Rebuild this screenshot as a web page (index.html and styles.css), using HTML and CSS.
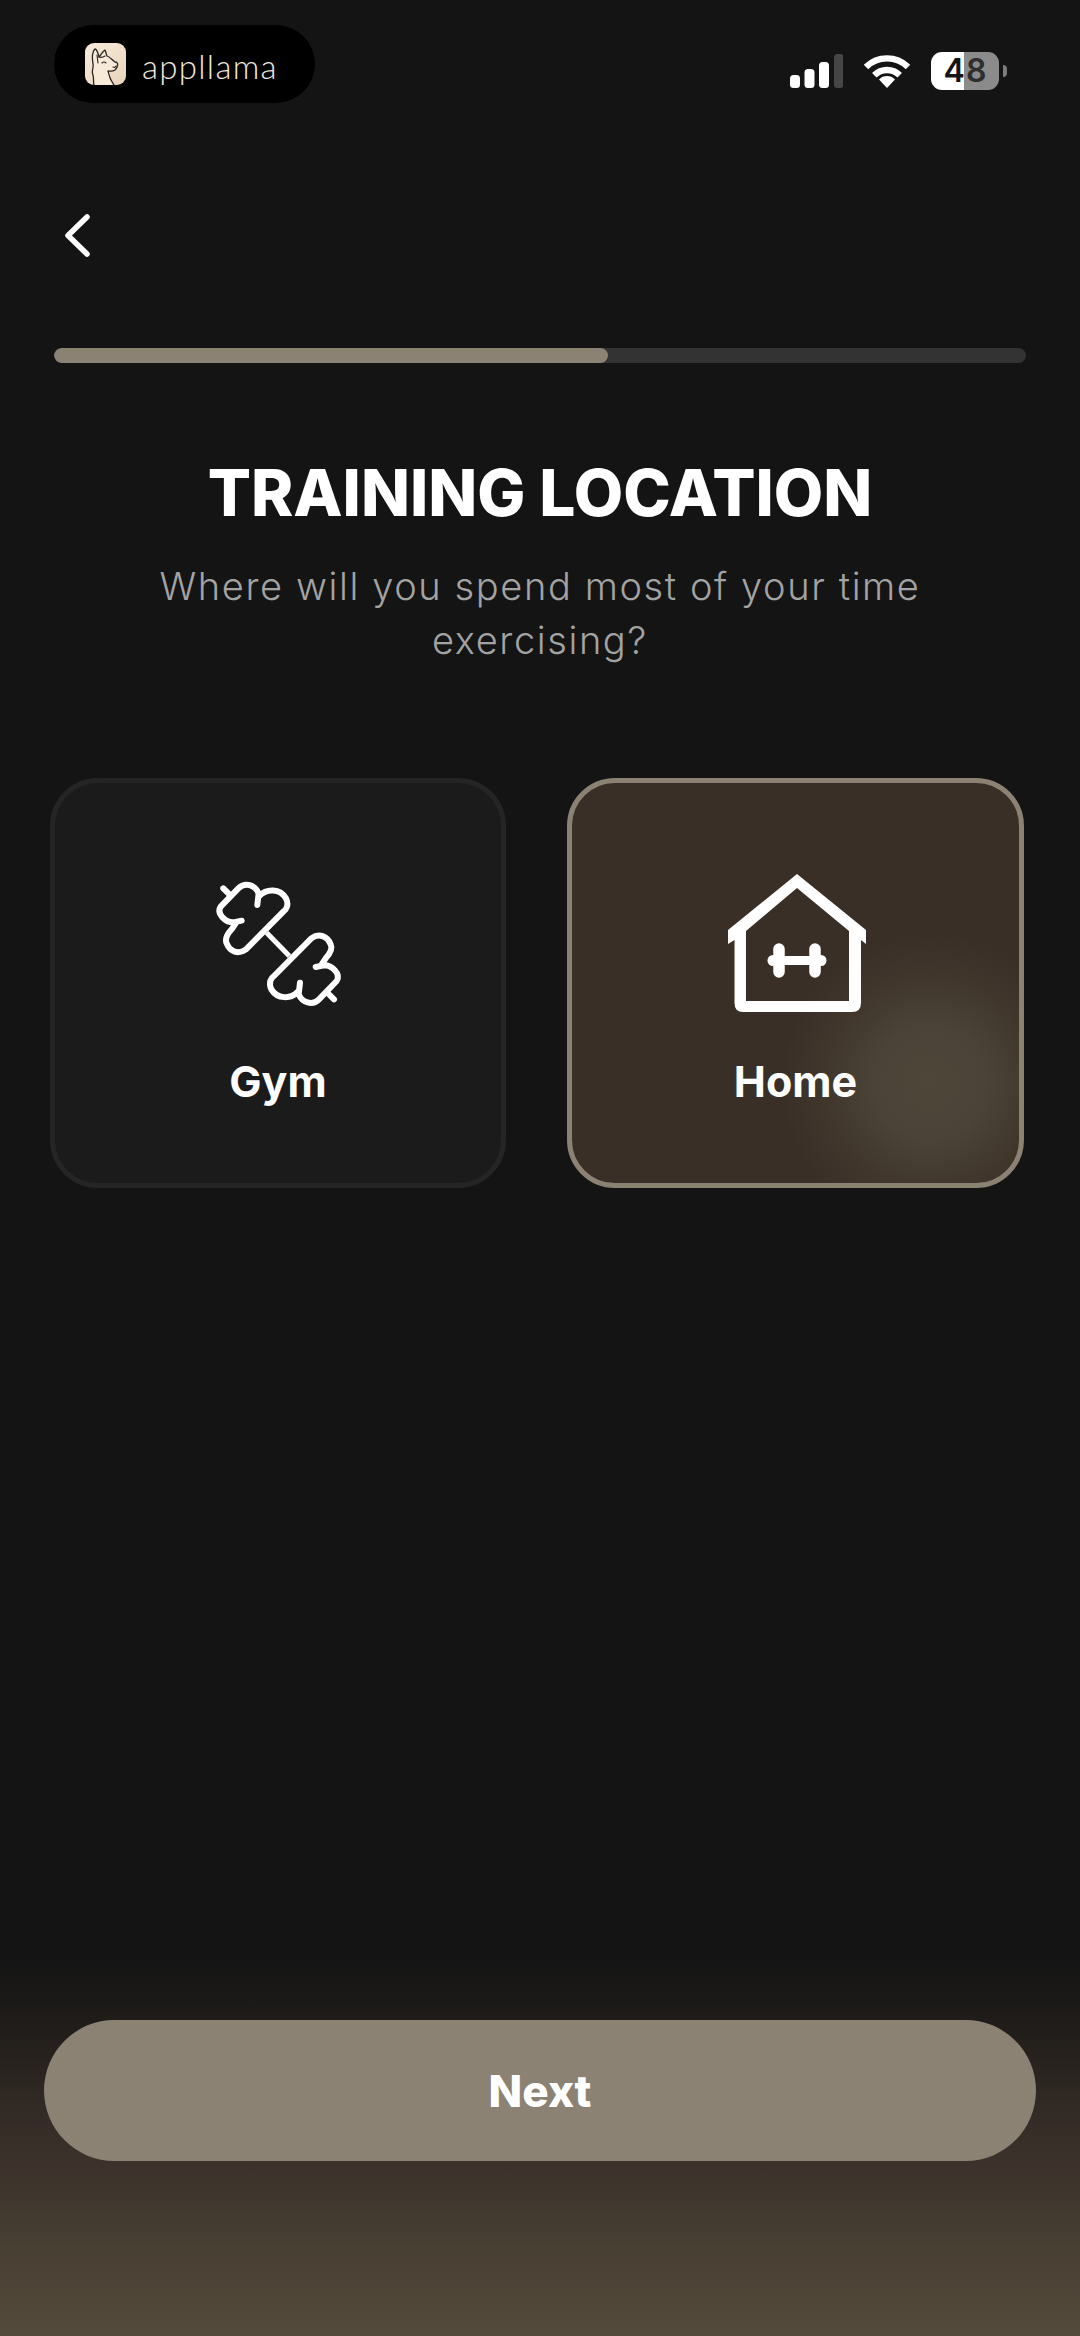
FILE: index.html
```html
<!DOCTYPE html>
<html lang="en">
<head>
<meta charset="utf-8">
<title>Training location</title>
<link rel="stylesheet" href="styles.css">
</head>
<body>
<main class="screen">
  <header class="status">
    <div class="brand">
      <svg class="brand-icon" viewBox="0 0 41 42" width="41" height="42">
        <defs><linearGradient id="lg" x1="0" y1="0" x2="1" y2="1"><stop offset="0" stop-color="#f8ecdc"/><stop offset="1" stop-color="#e9d3ba"/></linearGradient></defs>
        <rect width="41" height="42" rx="9" fill="url(#lg)"/>
        <path d="M9 42C8 38 9 35 8 32C6 28 9 25 8 21C7 15 7 9 10 6C12 6 13 10 14 14C16 12 17 9 20 7C21 9 21 11 22 13C25 14 27 17 30 19C34 19 33 24 30 27C27 29 25 28 23 28C24 33 26 38 29 42" fill="#f7ead9" stroke="#2a2622" stroke-width="1.3" stroke-linejoin="round" stroke-linecap="round"/>
        <path d="M17 20q2-2 4 0M28 24q2 1 3-1M12 12l1 8M14 14q3 1 6-1" fill="none" stroke="#2a2622" stroke-width="1.1" stroke-linecap="round"/>
      </svg>
      <span class="brand-name">appllama</span>
    </div>
    <div class="indicators">
      <svg class="signal" viewBox="0 0 53 34" width="53" height="34">
        <rect x="0" y="21" width="10" height="13" rx="3.5" fill="#fff"/>
        <rect x="14.500" y="15" width="10" height="19" rx="3.500" fill="#fff"/>
        <rect x="29" y="8" width="10" height="26" rx="3.500" fill="#fff"/>
        <rect x="44" y="0" width="9.500" height="34" rx="3.500" fill="#464646"/>
      </svg>
      <svg class="wifi" viewBox="864 55 46 33" width="46" height="33">
        <path d="M866 67A30 30 0 0 1 908 67M874.300 75.300A18 18 0 0 1 899.700 75.300" fill="none" stroke="#fff" stroke-width="6.400"/>
        <path d="M887 88L879 79.500A11 11 0 0 1 895 79.500Z" fill="#fff"/>
      </svg>
      <div class="battery-wrap">
        <div class="battery"><span>4</span><span class="dim">8</span></div>
        <span class="nub"></span>
      </div>
    </div>
  </header>

  <button class="back" aria-label="Back">
    <svg viewBox="0 0 30 46" width="30" height="46"><path d="M24 4L5 22.500L24 41" fill="none" stroke="#fff" stroke-width="5.500" stroke-linecap="round" stroke-linejoin="round"/></svg>
  </button>

  <div class="progress"><div class="progress-fill" style="width:57%"></div></div>

  <section class="intro">
    <h1>TRAINING LOCATION</h1>
    <p>Where will you spend most of your time exercising?</p>
  </section>

  <section class="options">
    <article class="card">
      <svg class="card-icon gym" viewBox="0 0 480 480" width="160" height="160">
        <defs>
          <g id="plate" fill="none" stroke="#fff" stroke-width="18" stroke-linecap="round" stroke-linejoin="round">
            <path d="M70 85L92 107"/>
            <path d="M125 182L100 187C78 188 48 162 62 140L115 85C135 65 165 75 176 100L172 135"/>
            <path d="M178 108C200 85 240 85 258 115C268 135 258 150 250 155L138 268C115 285 90 275 80 250C73 235 82 222 95 208L107 190"/>
          </g>
        </defs>
        <use href="#plate"/>
        <use href="#plate" transform="rotate(180 236 251.500)"/>
        <path d="M200 218L268 288" stroke="#fff" stroke-width="15" fill="none"/>
      </svg>
      <h2>Gym</h2>
    </article>
    <article class="card selected">
      <svg class="card-icon" viewBox="0 0 170 160" width="170" height="160">
        <path fill-rule="evenodd" fill="#fff" d="M86 14L155 70V84L150 80V143Q150 152 141 152H32Q23.500 152 23.500 143V80L17 84V70ZM86 28L35 71V141H138V71Z"/>
        <path d="M68 89V112M104 89V112" stroke="#fff" stroke-width="11.500" stroke-linecap="round"/>
        <path d="M62 100.500H110" stroke="#fff" stroke-width="9" stroke-linecap="round"/>
        <circle cx="62" cy="100.500" r="5.500" fill="#fff"/><circle cx="110" cy="100.500" r="5.500" fill="#fff"/>
      </svg>
      <h2>Home</h2>
    </article>
  </section>

  <footer class="footer">
    <button class="next">Next</button>
  </footer>
</main>
</body>
</html>
```

FILE: styles.css
```css
* { box-sizing: border-box; }
html, body { margin: 0; padding: 0; background: #141414; }
body { font-family: Inter, "Liberation Sans", sans-serif; color: #fff; }

.screen {
  width: 1080px;
  height: 2336px;
  display: flex;
  flex-direction: column;
  overflow: hidden;
}

.status {
  display: flex;
  justify-content: space-between;
  align-items: flex-start;
  padding: 25px 73px 0 54px;
  height: 103px;
}
.brand {
  width: 261px;
  height: 78px;
  border-radius: 39px;
  background: #000;
  display: flex;
  align-items: center;
  gap: 16px;
  padding-left: 31px;
}
.brand-icon { flex: none; }
.brand-name {
  font-family: Lato, sans-serif;
  font-weight: 300;
  font-size: 33px;
  letter-spacing: 1.300px;
  color: #f3e9dc;
  padding-top: 3px;
}
.indicators {
  display: flex;
  align-items: flex-start;
  padding-top: 27px;
}
.signal { margin-top: 2px; }
.wifi { margin: 3px 0 0 21px; }
.battery-wrap { display: flex; align-items: center; margin-left: 21px; }
.battery {
  width: 68px;
  height: 38px;
  border-radius: 11px;
  background: linear-gradient(90deg, #fff 0 48.500%, #8b8b8b 48.500% 100%);
  display: flex;
  justify-content: center;
  align-items: center;
  gap: 1px;
  font-family: Inter, sans-serif;
  font-size: 32px;
  font-weight: 600;
  line-height: 38px;
  color: #141414;
}
.battery .dim { color: #2e2e2e; }
.nub {
  width: 4px;
  height: 12px;
  margin-left: 4px;
  border-radius: 0 6px 6px 0;
  background: #7c7c7c;
}

.back {
  align-self: flex-start;
  margin: 110px 0 0 63px;
  padding: 0;
  border: 0;
  background: none;
  display: block;
  height: 46px;
}
.back svg { display: block; }

.progress {
  margin: 89px 54px 0 54px;
  height: 15px;
  border-radius: 8px;
  background: #333333;
  overflow: hidden;
  flex: none;
}
.progress-fill {
  height: 100%;
  border-radius: 8px;
  background: #8b8274;
}

.intro { text-align: center; margin-top: 92px; }
.intro h1 {
  margin: 0;
  font-size: 64px;
  line-height: 76px;
  font-weight: 800;
  letter-spacing: 0;
}
.intro p {
  margin: 28px auto 0;
  width: 820px;
  font-size: 38px;
  line-height: 54px;
  font-weight: 300;
  letter-spacing: 1.600px;
  color: #a3a3a3;
}

.options {
  display: grid;
  grid-template-columns: 456px 457px;
  column-gap: 61px;
  margin: 111px 0 0 50px;
}
.card {
  height: 410px;
  border-radius: 48px;
  border: 5px solid #252525;
  background: #1b1b1b;
  padding-top: 77px;
  display: flex;
  flex-direction: column;
  align-items: center;
}
.card-icon { display: block; flex: none; }
.card-icon.gym { margin-left: 3px; }
.card h2 {
  margin: 36px 0 0;
  font-size: 43px;
  line-height: 50px;
  font-weight: 700;
  letter-spacing: 0;
}
.card.selected {
  border-color: #8b8274;
  background: radial-gradient(circle 150px at 358px 300px, #4e4639 0%, #4b4337 38%, #40362c 72%, #3a2f27 100%), #3a2f27;
}

.footer {
  margin-top: auto;
  height: 376px;
  padding: 60px 44px 0 44px;
  background: linear-gradient(180deg, #141414 0%, #1f1c19 16%, #3a302a 50%, #40372e 64%, #494034 77%, #544a3b 100%);
}
.next {
  width: 100%;
  height: 141px;
  border: 0;
  border-radius: 71px;
  background: #8b8274;
  color: #fff;
  font-family: Inter, sans-serif;
  font-size: 44px;
  font-weight: 800;
  display: block;
}
```
